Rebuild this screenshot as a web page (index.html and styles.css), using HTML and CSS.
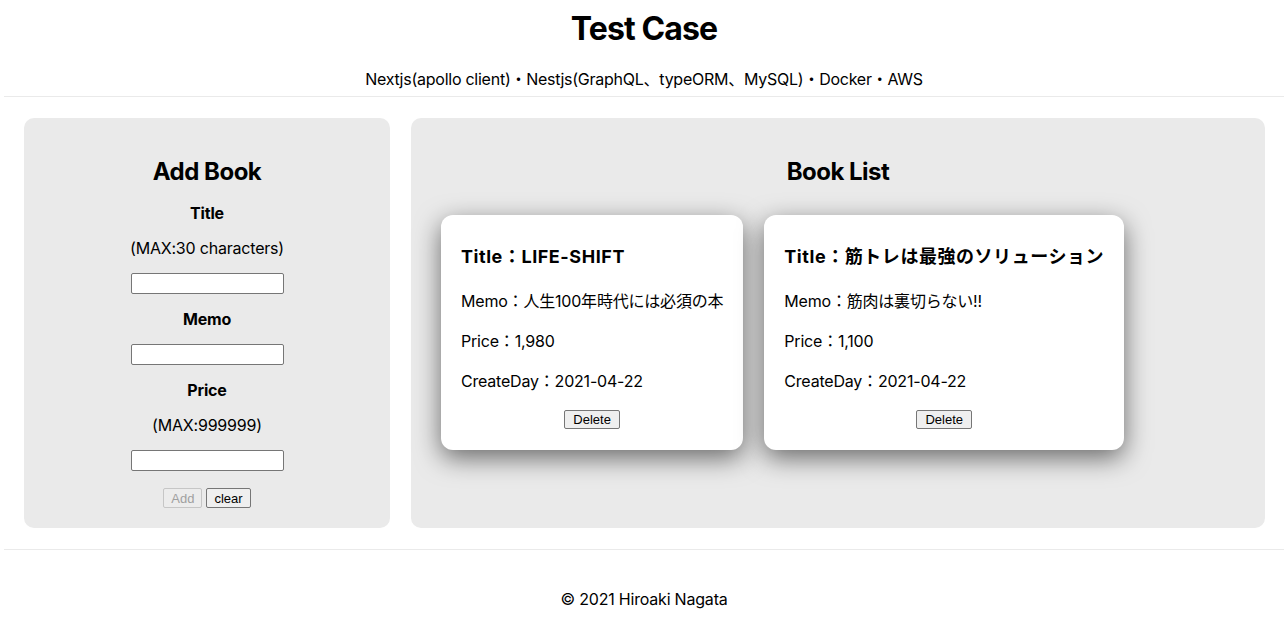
FILE: index.html
```html
<!DOCTYPE html>
<html lang="ja">
<head>
<meta charset="utf-8">
<title>Test Case</title>
<link rel="stylesheet" href="styles.css">
</head>
<body>
<header class="header">
  <h1 class="site-title">Test Case</h1>
  <p class="site-sub">Nextjs(apollo client)・Nestjs(GraphQL、typeORM、MySQL)・Docker・AWS</p>
</header>
<main class="main">
  <section class="panel add-panel">
    <h2 class="panel-title">Add Book</h2>
    <div class="label">Title</div>
    <div class="hint">(MAX:30 characters)</div>
    <input class="field" type="text">
    <div class="label">Memo</div>
    <input class="field" type="text">
    <div class="label">Price</div>
    <div class="hint">(MAX:999999)</div>
    <input class="field" type="text">
    <div class="actions">
      <button class="btn" disabled>Add</button>
      <button class="btn">clear</button>
    </div>
  </section>
  <section class="panel list-panel">
    <h2 class="panel-title">Book List</h2>
    <div class="cards">
      <article class="card">
        <h3 class="card-title">Title：LIFE-SHIFT</h3>
        <p class="card-line memo">Memo：人生100年時代には必須の本</p>
        <p class="card-line">Price：1,980</p>
        <p class="card-line">CreateDay：2021-04-22</p>
        <button class="btn delete">Delete</button>
      </article>
      <article class="card">
        <h3 class="card-title">Title：筋トレは最強のソリューション</h3>
        <p class="card-line memo">Memo：筋肉は裏切らない!!</p>
        <p class="card-line">Price：1,100</p>
        <p class="card-line">CreateDay：2021-04-22</p>
        <button class="btn delete">Delete</button>
      </article>
    </div>
  </section>
</main>
<footer class="footer">
  <p class="copy">© 2021 Hiroaki Nagata</p>
</footer>
</body>
</html>
```

FILE: styles.css
```css
* { box-sizing: border-box; }
html, body {
  margin: 0;
  padding: 0;
  background: #fff;
  color: #000;
  font-family: Inter, "Noto Sans CJK JP", sans-serif;
  font-size: 16px;
  letter-spacing: -0.2px;
}
.header {
  margin-left: 4px;
  border-bottom: 1px solid #eaeaea;
  text-align: center;
  padding-top: 11px;
  height: 97px;
}
.site-title {
  margin: 0;
  font-size: 32px;
  line-height: 36px;
  font-weight: 700;
  letter-spacing: -0.9px;
}
.site-sub {
  margin: 22px 0 0;
  line-height: 20px;
  letter-spacing: -0.25px;
}
.main {
  display: grid;
  grid-template-columns: 366px 854px;
  column-gap: 21px;
  padding: 21px 0 0 24px;
}
.panel {
  background: #eaeaea;
  border-radius: 10px;
  height: 410px;
}
.panel-title {
  margin: 0;
  font-size: 24px;
  line-height: 30px;
  font-weight: 700;
  text-align: center;
  letter-spacing: -0.5px;
}
.add-panel {
  display: flex;
  flex-direction: column;
  align-items: center;
  gap: 15px;
  padding-top: 39px;
}
.add-panel .panel-title { margin-bottom: 1px; }
.label {
  font-weight: 700;
  line-height: 20px;
}
.hint { line-height: 20px; }
.field {
  width: 153px;
  height: 21px;
  margin: 0;
  border: 1px solid #767676;
  border-radius: 2px;
  background: #fff;
  padding: 1px 2px;
}
.actions {
  display: flex;
  gap: 4px;
  margin-top: 2px;
}
.btn {
  font-family: "Liberation Sans", Arial, sans-serif;
  font-size: 13px;
  letter-spacing: 0;
  height: 20px;
  padding: 0 7px;
  border: 1px solid #767676;
  border-radius: 2px;
  background: #efefef;
  color: #000;
  margin: 0;
}
.btn:disabled {
  color: #a0a0a0;
  border-color: #c6c6c6;
  background: #ececec;
}
.list-panel {
  padding: 39px 30px 0;
}
.cards {
  display: flex;
  align-items: flex-start;
  gap: 21px;
  margin-top: 28px;
}
.card {
  background: #fff;
  border-radius: 12px;
  padding: 31px 20px 21px;
  box-shadow: 0 8px 26px rgba(0, 0, 0, 0.55);
  display: flex;
  flex-direction: column;
  height: 235px;
}
.card-title {
  margin: 0;
  font-size: 18px;
  line-height: 22px;
  font-weight: 700;
  white-space: nowrap;
  letter-spacing: 0.55px;
}
.card-line {
  margin: 20px 0 0;
  line-height: 20px;
  white-space: nowrap;
}
.card-line.memo { margin-top: 23px; }
.delete {
  align-self: center;
  margin-top: 19px;
  height: 19px;
  padding: 0 8px;
}
.footer {
  margin: 21px 0 0 4px;
  border-top: 1px solid #eaeaea;
  text-align: center;
}
.copy {
  margin: 39px 0 0;
  line-height: 20px;
}
```
